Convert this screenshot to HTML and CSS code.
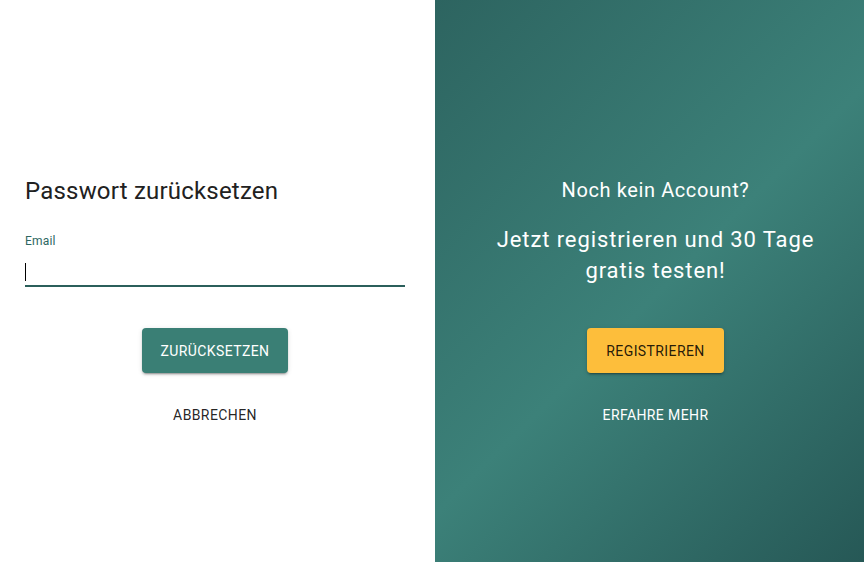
FILE: index.html
```html
<!DOCTYPE html>
<html lang="de">
<head>
  <meta charset="UTF-8">
  <meta name="viewport" content="width=device-width, initial-scale=1.0">
  <title>Passwort zurücksetzen</title>
  <link rel="stylesheet" href="styles.css">
</head>
<body>
  <div class="page">
    <div class="left">
      <form class="form">
        <h2 class="title">Passwort zurücksetzen</h2>
        <label class="field">
          <span class="field-label">Email</span>
          <span class="field-box">
            <input class="field-input" type="email">
            <span class="caret"></span>
          </span>
        </label>
        <button type="button" class="btn btn-primary">Zurücksetzen</button>
        <button type="button" class="btn btn-text">Abbrechen</button>
      </form>
    </div>
    <div class="right">
      <div class="promo">
        <h3 class="promo-title">Noch kein Account?</h3>
        <p class="promo-text">Jetzt registrieren und 30 Tage gratis testen!</p>
        <button type="button" class="btn btn-accent">Registrieren</button>
        <button type="button" class="btn btn-text btn-light">Erfahre mehr</button>
      </div>
    </div>
  </div>
</body>
</html>
```

FILE: styles.css
```css
body {
  margin: 0;
  font-family: Roboto, "Liberation Sans", sans-serif;
  color: rgba(0, 0, 0, 0.87);
}
.page {
  display: flex;
  height: 100vh;
}
.left {
  width: 435px;
  background: #fff;
}
.form {
  width: 380px;
  margin-left: 25px;
  padding-top: 175px;
  display: flex;
  flex-direction: column;
  align-items: center;
}
.title {
  align-self: stretch;
  margin: 0;
  font-size: 24px;
  line-height: 32px;
  font-weight: 400;
  letter-spacing: 0.2px;
  color: #212121;
}
.field {
  align-self: stretch;
  display: block;
  margin-top: 26px;
}
.field-label {
  display: block;
  font-size: 12px;
  line-height: 16px;
  letter-spacing: 0.2px;
  color: #2d6762;
}
.field-box {
  position: relative;
  display: block;
}
.field-input {
  display: block;
  width: 100%;
  box-sizing: border-box;
  margin-top: 4px;
  padding: 6px 0 7px;
  border: 0;
  border-bottom: 2px solid #2b5f5b;
  outline: none;
  font-family: inherit;
  font-size: 16px;
  line-height: 19px;
  color: #212121;
  background: transparent;
}
.caret {
  position: absolute;
  left: 0;
  top: 10px;
  width: 1px;
  height: 18px;
  background: #000;
}
.btn {
  font-family: inherit;
  font-size: 14px;
  font-weight: 400;
  letter-spacing: 0.4px;
  text-transform: uppercase;
  border: 0;
  border-radius: 4px;
  cursor: pointer;
}
.btn-primary,
.btn-accent {
  height: 45px;
  padding: 0 19px;
  margin-top: 41px;
  box-shadow: 0 3px 1px -2px rgba(0, 0, 0, 0.2), 0 2px 2px 0 rgba(0, 0, 0, 0.14), 0 1px 5px 0 rgba(0, 0, 0, 0.12);
}
.btn-primary {
  background: #3a7f75;
  color: #fff;
}
.btn-accent {
  background: #fdbe3b;
  color: rgba(0, 0, 0, 0.87);
  margin-top: 42px;
}
.btn-text {
  height: 36px;
  padding: 0 16px;
  margin-top: 24px;
  background: transparent;
  color: rgba(0, 0, 0, 0.87);
}
.btn-light {
  color: #fff;
}
.right {
  flex: 1;
  background: linear-gradient(135deg, #2d6460 0%, #3c8179 52%, #265856 100%);
  color: #fff;
}
.promo {
  padding: 176px 0 0 12px;
  display: flex;
  flex-direction: column;
  align-items: center;
  text-align: center;
}
.promo-title {
  margin: 0;
  font-size: 20px;
  line-height: 28px;
  font-weight: 400;
  letter-spacing: 0.6px;
}
.promo-text {
  width: 360px;
  margin: 20px 0 0;
  font-size: 22px;
  line-height: 31px;
  font-weight: 400;
  letter-spacing: 0.9px;
}
```
